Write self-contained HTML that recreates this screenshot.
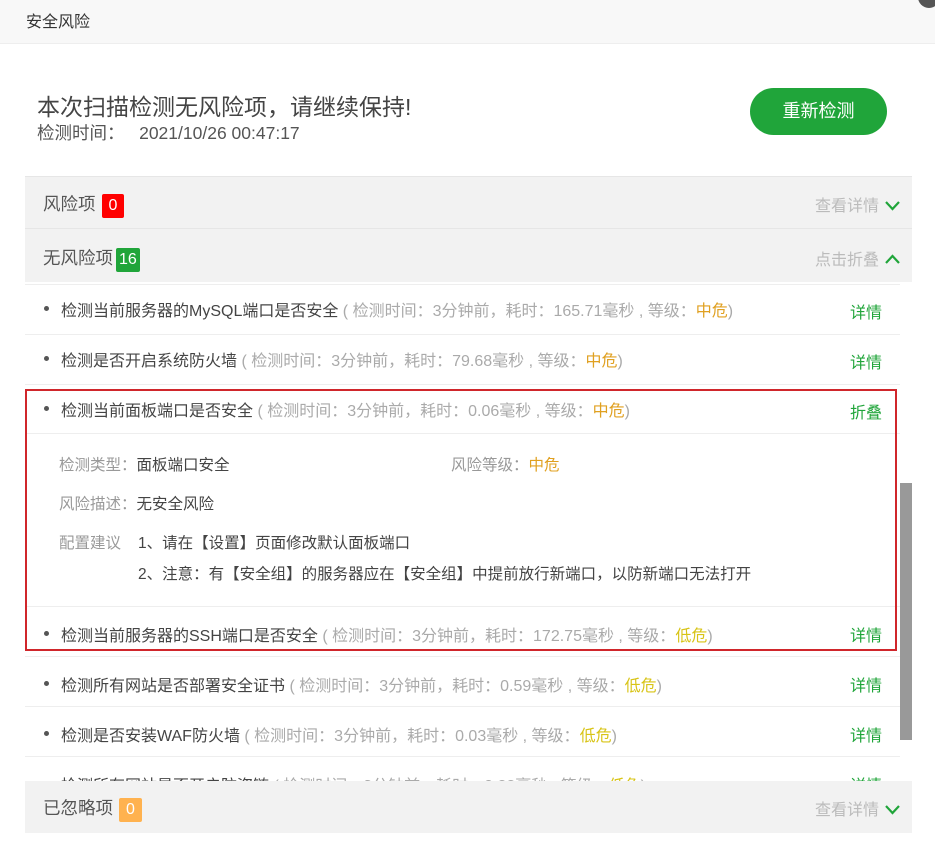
<!DOCTYPE html>
<html><head><meta charset="utf-8"><style>
*{margin:0;padding:0;box-sizing:border-box}
body{width:935px;height:856px;background:#fff;font-family:"Liberation Sans","Noto Sans CJK SC",sans-serif;position:relative;overflow:hidden;color:#333}
.a{position:absolute;white-space:nowrap}
.title{left:0;top:0;width:935px;height:44px;background:#f8f8f8;border-bottom:1px solid #eee}
.hdr{left:25px;width:887px;height:52px;background:#f2f2f2;border-top:1px solid #e6e6e6}
.hdr .t{position:absolute;left:18px;top:14px;font-size:17.5px;color:#555}
.badge{display:inline-block;color:#fff;font-size:16px;padding:0 7px;height:24px;line-height:24px;border-radius:2px;margin-left:6px;vertical-align:0px}
.hdr .r{position:absolute;right:12px;top:15px;font-size:16px;color:#bbb}
.hdr .r svg{vertical-align:0px;margin-left:6px}
.row{left:25px;width:875px;height:50px;border-top:1px solid #eee}
.row .t{position:absolute;left:36px;top:12px;font-size:16px;color:#444}
.row .t::before{content:"";position:absolute;left:-17px;top:9px;width:5px;height:5px;border-radius:50%;background:#555}
.g{color:#aaa}.m{color:#e0a020}.l{color:#d8c417}
.row .d{position:absolute;right:18px;top:14px;font-size:16px;color:#20a53a}
.lab{color:#999;font-size:15.5px}
</style></head><body>
<div class="a title"><span style="position:absolute;left:26px;top:8px;font-size:16px;color:#333">安全风险</span></div>
<div class="a" style="left:918px;top:-14px;width:22px;height:22px;border-radius:50%;background:#555"></div>
<div class="a" style="left:37px;top:88px;font-size:23px;color:#444">本次扫描检测无风险项，请继续保持!</div>
<div class="a" style="left:37px;top:120px;font-size:17.5px;color:#555">检测时间：&nbsp;&nbsp;&nbsp;2021/10/26 00:47:17</div>
<div class="a" style="left:750px;top:88px;width:137px;height:47px;border-radius:24px;background:#20a53a;color:#fff;font-size:18px;text-align:center;line-height:47px">重新检测</div>

<div class="a hdr" style="top:176px"><span class="t">风险项<span class="badge" style="background:#f00">0</span></span><span class="r">查看详情<svg width="15" height="11"><path d="M1 2l6.5 7 6.5-7" stroke="#20a53a" stroke-width="2.2" fill="none"/></svg></span></div>
<div class="a hdr" style="top:228px;height:54px"><span class="t" style="top:16px">无风险项<span class="badge" style="background:#20a53a;padding:0 3px;margin-left:3px">16</span></span><span class="r" style="top:17px">点击折叠<svg width="15" height="11"><path d="M1 9l6.5-7 6.5 7" stroke="#20a53a" stroke-width="2.2" fill="none"/></svg></span></div>

<div class="a row" style="top:284px"><span class="t">检测当前服务器的MySQL端口是否安全 <span class="g">( 检测时间：3分钟前，耗时：165.71毫秒 , 等级：<span class="m">中危</span>)</span></span><span class="d">详情</span></div>
<div class="a row" style="top:334px"><span class="t">检测是否开启系统防火墙 <span class="g">( 检测时间：3分钟前，耗时：79.68毫秒 , 等级：<span class="m">中危</span>)</span></span><span class="d">详情</span></div>
<div class="a row" style="top:384px;height:50px;border-bottom:1px solid #eee"><span class="t">检测当前面板端口是否安全 <span class="g">( 检测时间：3分钟前，耗时：0.06毫秒 , 等级：<span class="m">中危</span>)</span></span><span class="d">折叠</span></div>
<div class="a lab" style="left:59px;top:453px">检测类型：<span style="color:#444">面板端口安全</span></div>
<div class="a lab" style="left:451px;top:453px">风险等级：<span class="m">中危</span></div>
<div class="a lab" style="left:59px;top:492px">风险描述：<span style="color:#444">无安全风险</span></div>
<div class="a lab" style="left:59px;top:531px">配置建议</div>
<div class="a" style="left:138px;top:531px;font-size:15.5px;color:#444">1、请在【设置】页面修改默认面板端口</div>
<div class="a" style="left:138px;top:562px;font-size:15.5px;color:#444">2、注意：有【安全组】的服务器应在【安全组】中提前放行新端口，以防新端口无法打开</div>
<div class="a row" style="top:606px"><span class="t" style="top:15px">检测当前服务器的SSH端口是否安全 <span class="g">( 检测时间：3分钟前，耗时：172.75毫秒 , 等级：<span class="l">低危</span>)</span></span><span class="d" style="top:15px">详情</span></div>
<div class="a" style="left:25px;top:389px;width:872px;height:262px;border:2px solid #d0262b"></div>
<div class="a row" style="top:656px"><span class="t" style="top:15px">检测所有网站是否部署安全证书 <span class="g">( 检测时间：3分钟前，耗时：0.59毫秒 , 等级：<span class="l">低危</span>)</span></span><span class="d" style="top:15px">详情</span></div>
<div class="a row" style="top:706px"><span class="t" style="top:15px">检测是否安装WAF防火墙 <span class="g">( 检测时间：3分钟前，耗时：0.03毫秒 , 等级：<span class="l">低危</span>)</span></span><span class="d" style="top:15px">详情</span></div>
<div class="a row" style="top:756px"><span class="t" style="top:15px">检测所有网站是否开启防盗链 <span class="g">( 检测时间：3分钟前，耗时：0.22毫秒 , 等级：<span class="l">低危</span>)</span></span><span class="d" style="top:15px">详情</span></div>
<div class="a" style="left:900px;top:483px;width:12px;height:257px;background:#999"></div>
<div class="a hdr" style="top:781px;border-top:none"><span class="t">已忽略项<span class="badge" style="background:#ffb24f">0</span></span><span class="r">查看详情<svg width="15" height="11"><path d="M1 2l6.5 7 6.5-7" stroke="#20a53a" stroke-width="2.2" fill="none"/></svg></span></div>
</body></html>
